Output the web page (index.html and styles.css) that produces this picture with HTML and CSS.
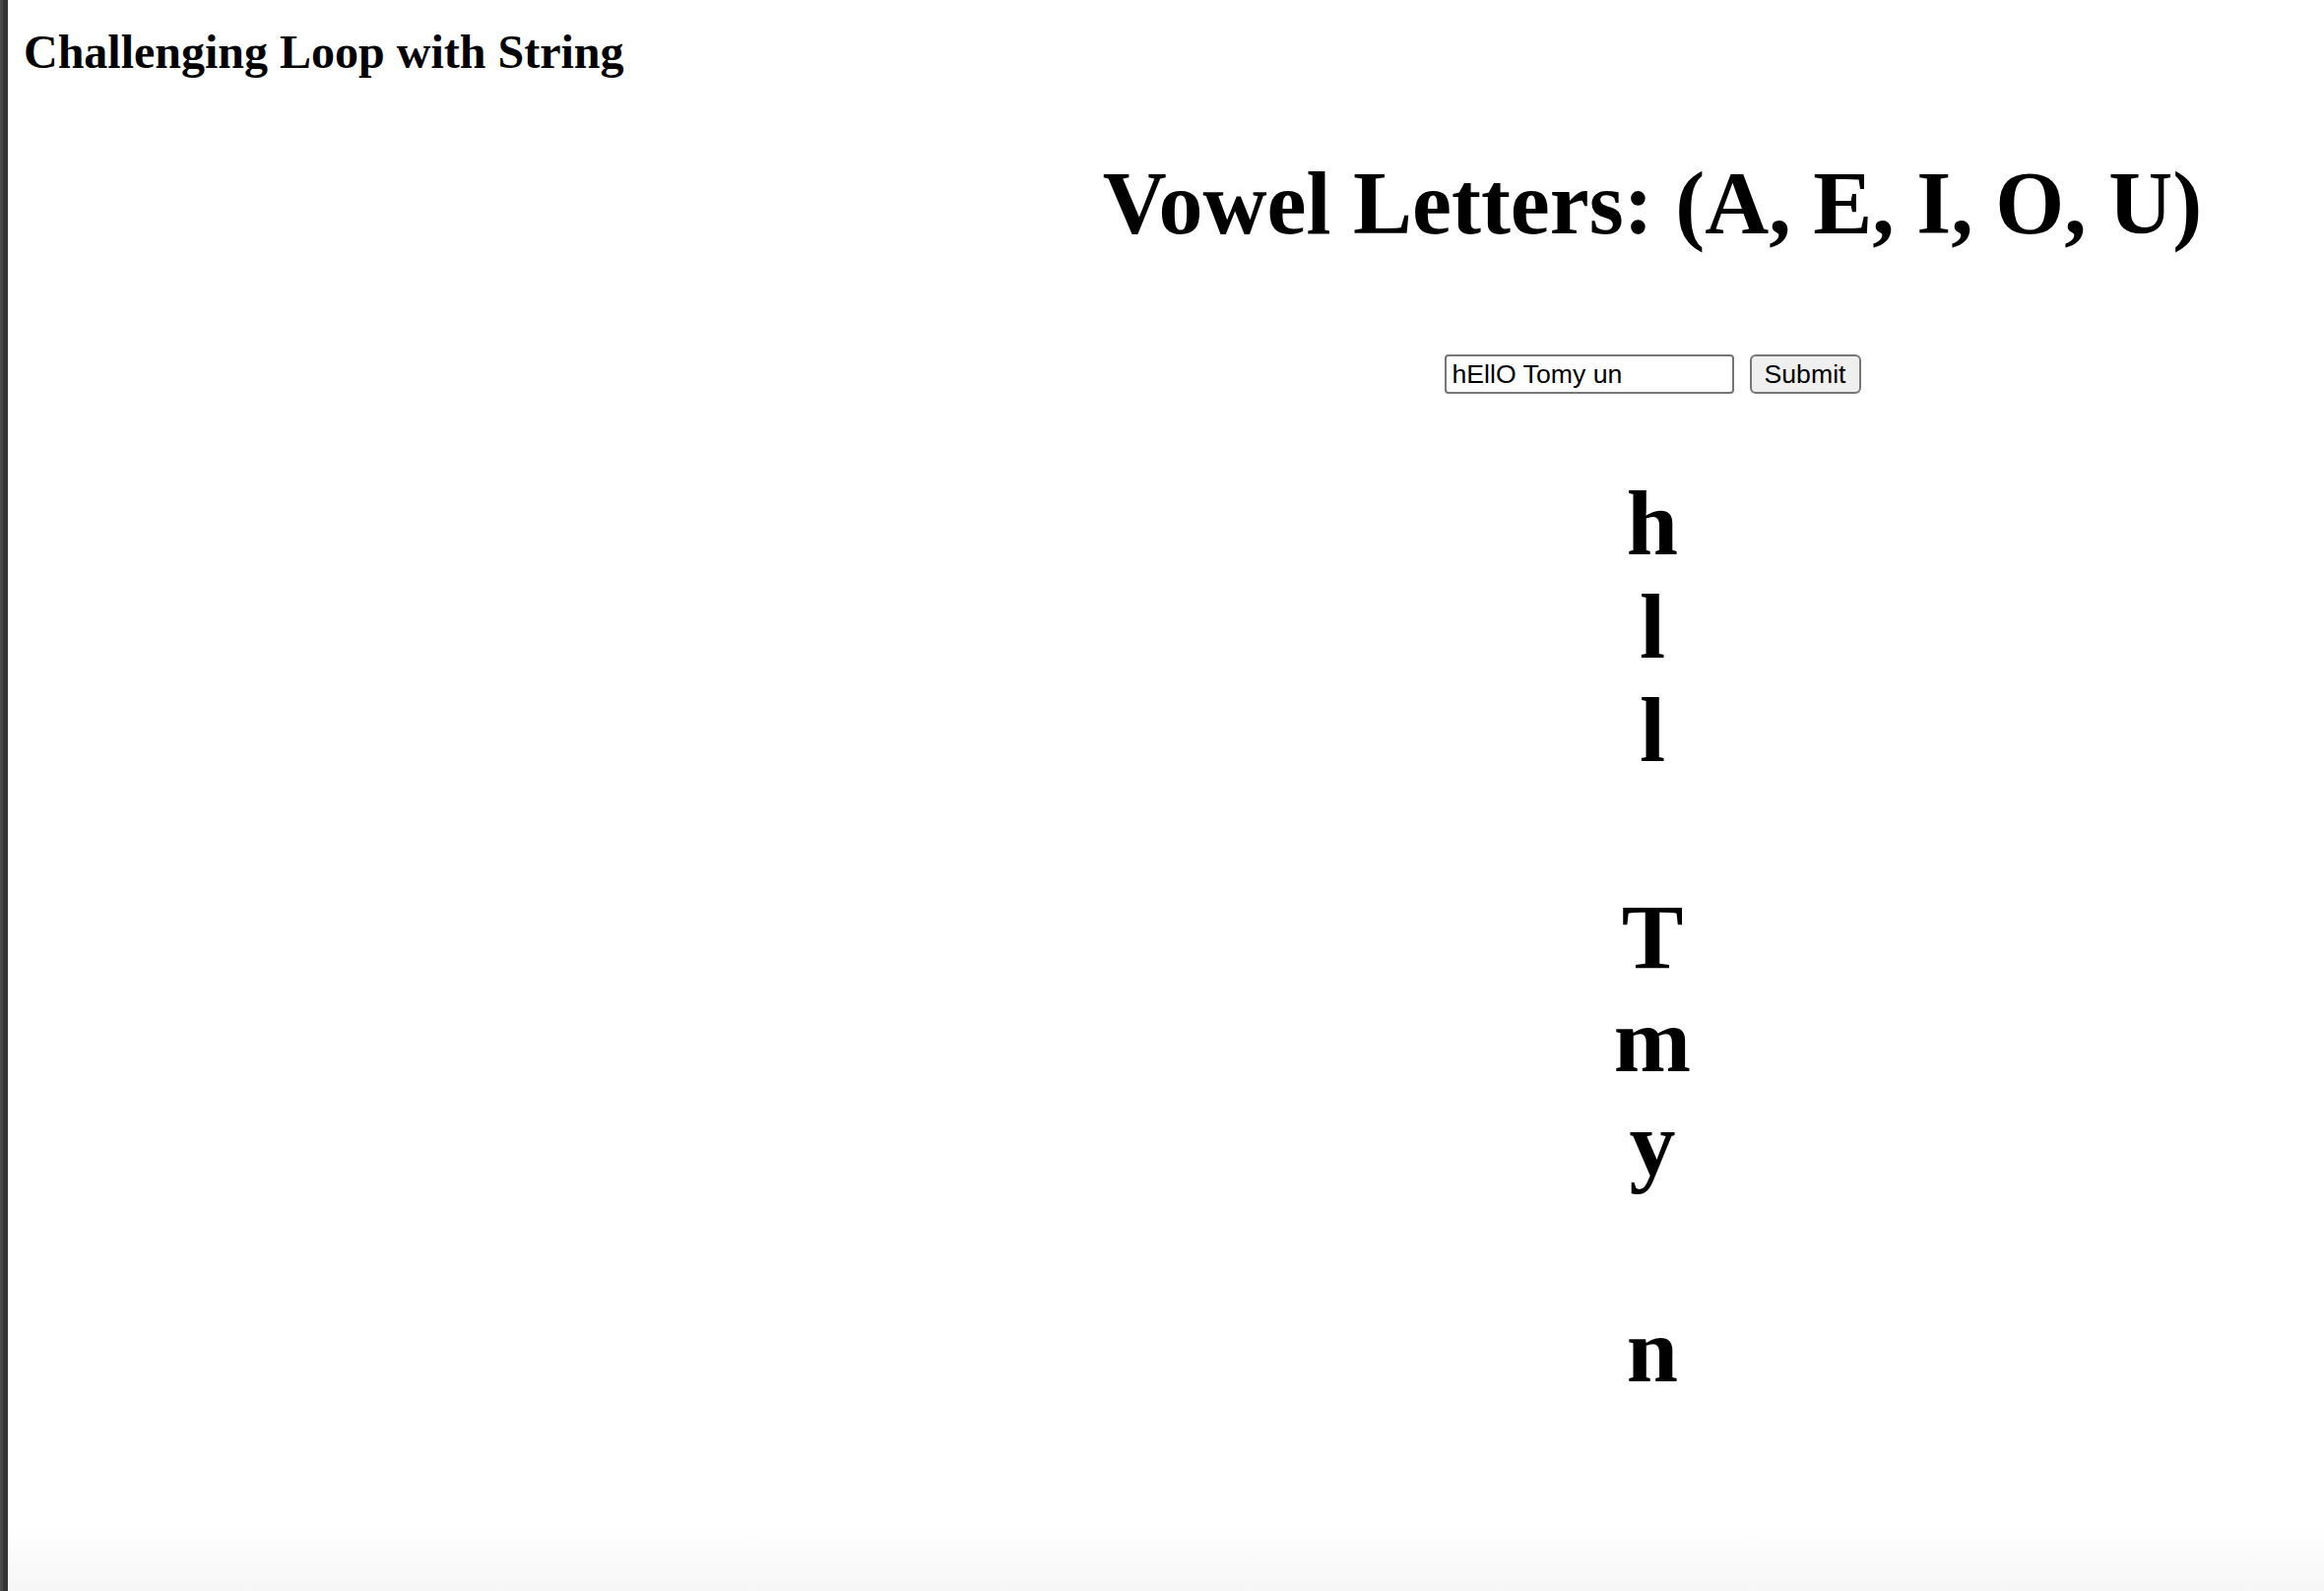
FILE: index.html
```html
<!DOCTYPE html>
<html lang="en">
<head>
<meta charset="utf-8">
<title>Challenging Loop with String</title>
<link rel="stylesheet" href="styles.css">
</head>
<body>
<h2 class="title">Challenging Loop with String</h2>
<div class="layout">
  <main class="main">
    <h1 class="heading">Vowel Letters: (A, E, I, O, U)</h1>
    <form class="form">
      <input class="field" type="text" value="hEllO Tomy un">
      <button class="btn" type="button">Submit</button>
    </form>
    <div class="letters">
      <div class="letter">h</div>
      <div class="letter">l</div>
      <div class="letter">l</div>
      <div class="letter">&nbsp;</div>
      <div class="letter">T</div>
      <div class="letter">m</div>
      <div class="letter">y</div>
      <div class="letter">&nbsp;</div>
      <div class="letter">n</div>
    </div>
  </main>
</div>
</body>
</html>
```
FILE: styles.css
```css
html {
  background: linear-gradient(to right, #4a4a4a 0, #4a4a4a 3px, #353535 3px, #353535 8px, #ffffff 8px);
}
body {
  margin: 0 0 0 8px;
  padding: 0 16px;
  min-height: 1616px;
  box-sizing: border-box;
  background: linear-gradient(to bottom, #ffffff 0, #ffffff 1550px, #f6f6f6 1616px);
  font-family: "Liberation Serif", "Times New Roman", serif;
  color: #000;
}
.title {
  margin: 0;
  padding-top: 25px;
  font-size: 48px;
  font-weight: bold;
  line-height: normal;
}
.layout {
  display: flex;
  justify-content: flex-end;
}
.main {
  width: 1332px;
  text-align: center;
}
.heading {
  margin: 75px 0 0;
  font-size: 90px;
  font-weight: bold;
  line-height: normal;
}
.form {
  margin-top: 102px;
  display: flex;
  justify-content: center;
  gap: 16px;
}
.field {
  box-sizing: border-box;
  width: 294px;
  height: 40px;
  margin: 0;
  padding: 0 6px;
  border: 2px solid #767676;
  border-radius: 4px;
  font-family: "Liberation Sans", Arial, sans-serif;
  font-size: 26.67px;
  color: #000;
  background: #fff;
}
.btn {
  box-sizing: border-box;
  width: 113px;
  height: 40px;
  margin: 0;
  padding: 0;
  border: 2px solid #767676;
  border-radius: 6px;
  background: #efefef;
  font-family: "Liberation Sans", Arial, sans-serif;
  font-size: 26.67px;
  color: #000;
}
.letters {
  margin-top: 79px;
}
.letter {
  height: 105px;
  line-height: 105px;
  font-size: 94px;
  font-weight: bold;
}
```
